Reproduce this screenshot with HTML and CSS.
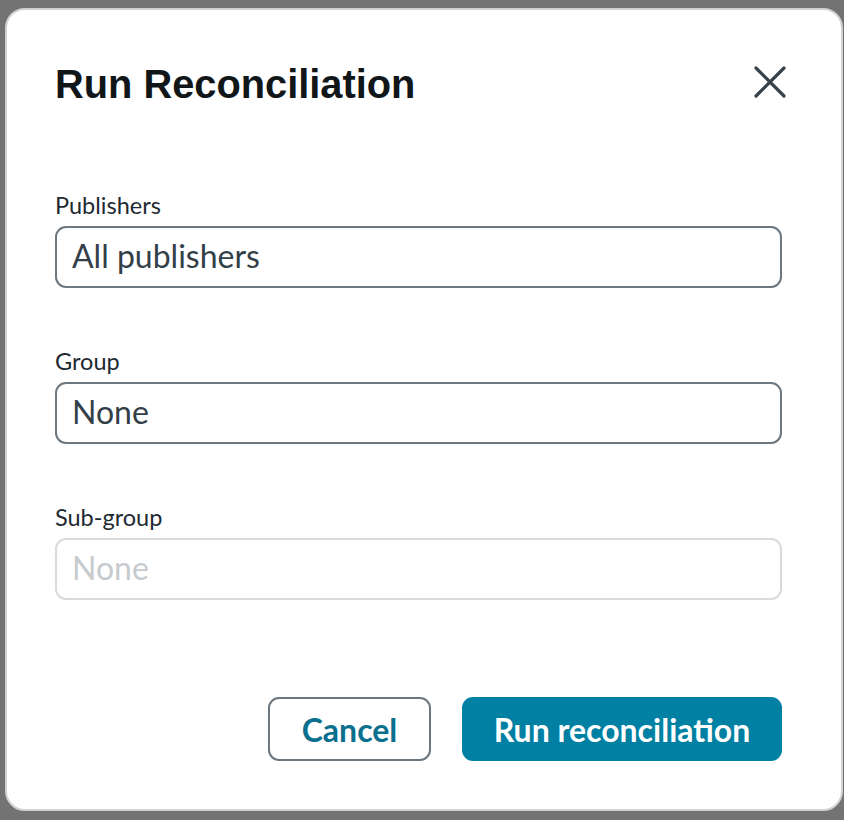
FILE: index.html
```html
<!DOCTYPE html>
<html lang="en">
<head>
<meta charset="utf-8">
<title>Run Reconciliation</title>
<link rel="stylesheet" href="styles.css">
</head>
<body>
<div class="backdrop">
  <div class="modal" role="dialog" aria-labelledby="modal-title">
    <div class="modal-header">
      <h1 id="modal-title" class="modal-title">Run Reconciliation</h1>
      <button class="close-btn" aria-label="Close">
        <svg width="32" height="32" viewBox="0 0 32 32" fill="none" stroke="#37424a" stroke-width="3.2" stroke-linecap="round">
          <path d="M2 2 L30 30 M30 2 L2 30"/>
        </svg>
      </button>
    </div>
    <div class="modal-body">
      <div class="field">
        <label class="field-label">Publishers</label>
        <div class="select">All publishers</div>
      </div>
      <div class="field">
        <label class="field-label">Group</label>
        <div class="select">None</div>
      </div>
      <div class="field">
        <label class="field-label">Sub-group</label>
        <div class="select select-disabled">None</div>
      </div>
    </div>
    <div class="modal-footer">
      <button class="btn btn-secondary">Cancel</button>
      <button class="btn btn-primary">Run reconciliation</button>
    </div>
  </div>
</div>
</body>
</html>
```

FILE: styles.css
```css
html, body {
  margin: 0;
  padding: 0;
}
body {
  background: #737373;
  width: 844px;
  height: 820px;
  overflow: hidden;
}
.backdrop {
  padding: 8px 1px 9px 5px;
  height: 820px;
  box-sizing: border-box;
  display: flex;
}
.modal {
  flex: 1;
  background: #ffffff;
  border: 2px solid #cfd3d6;
  border-radius: 20px;
  display: flex;
  flex-direction: column;
  padding: 0 59px 0 48px;
}
.modal-header {
  display: flex;
  justify-content: space-between;
  align-items: flex-start;
  padding-top: 50px;
}
.modal-title {
  margin: 0;
  font-family: "Liberation Sans", Arial, sans-serif;
  font-weight: 700;
  font-size: 39.8px;
  line-height: 48px;
  color: #111619;
}
.close-btn {
  background: none;
  border: 0;
  padding: 0;
  margin: 6px -4px 0 0;
  width: 32px;
  height: 32px;
  cursor: pointer;
}
.close-btn svg { display: block; }
.modal-body {
  display: flex;
  flex-direction: column;
  gap: 59px;
  padding-top: 83px;
}
.field {
  display: flex;
  flex-direction: column;
  gap: 7px;
}
.field-label {
  font-family: Lato, "Open Sans", sans-serif;
  font-size: 23.5px;
  line-height: 28px;
  color: #1e2a32;
}
.select {
  height: 62px;
  box-sizing: border-box;
  border: 2px solid #6c7780;
  border-radius: 11px;
  padding: 0 15px 4px;
  display: flex;
  align-items: center;
  font-family: Lato, "Open Sans", sans-serif;
  font-size: 32px;
  color: #333f48;
}
.select-disabled {
  border-color: #d7dbde;
  color: #c6cbcf;
}
.modal-footer {
  display: flex;
  justify-content: flex-end;
  gap: 31px;
  margin-top: auto;
  padding-bottom: 48px;
}
.btn {
  height: 64px;
  box-sizing: border-box;
  border-radius: 11px;
  font-family: Lato, "Open Sans", sans-serif;
  font-weight: 700;
  font-size: 32px;
  padding: 0 20px;
  cursor: pointer;
}
.btn-secondary {
  background: #ffffff;
  border: 2px solid #6c7780;
  color: #0b6f8e;
  width: 163px;
}
.btn-primary {
  background: #0080a3;
  border: 0;
  color: #ffffff;
  width: 320px;
}
```
